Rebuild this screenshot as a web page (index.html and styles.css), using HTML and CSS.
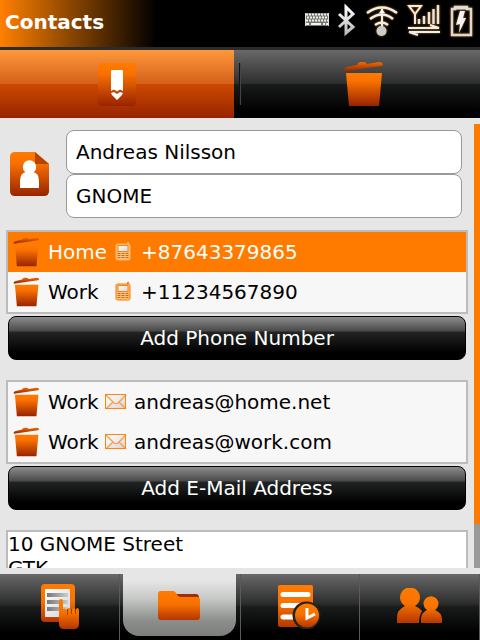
FILE: index.html
```html
<!DOCTYPE html>
<html lang="en">
<head>
<meta charset="utf-8">
<meta name="viewport" content="width=device-width, initial-scale=1">
<title>Contacts</title>
<link rel="stylesheet" href="styles.css">
</head>
<body>
<svg class="defs" aria-hidden="true">
  <defs>
    <linearGradient id="orange" x1="0" y1="0" x2="0" y2="1"><stop offset="0" stop-color="#ff7b00"/><stop offset=".25" stop-color="#f97100"/><stop offset="1" stop-color="#982300"/></linearGradient>
    <linearGradient id="lid" x1="0" y1="0" x2="0" y2="1"><stop offset="0" stop-color="#f06c00"/><stop offset="1" stop-color="#982300"/></linearGradient>
    <linearGradient id="warm" x1="0" y1="0" x2="0" y2="1"><stop offset="0" stop-color="#ff7b00"/><stop offset=".45" stop-color="#f87200"/><stop offset="1" stop-color="#b53600"/></linearGradient>
    <linearGradient id="paper" x1="0" y1="0" x2="1" y2="1"><stop offset="0" stop-color="#fff"/><stop offset="1" stop-color="#d4d4d8"/></linearGradient>
    <linearGradient id="silver" x1="0" y1="0" x2="0" y2="1"><stop offset="0" stop-color="#fff"/><stop offset="1" stop-color="#bbb"/></linearGradient>
    <linearGradient id="lines" x1="0" y1="0" x2="1" y2="0"><stop offset="0" stop-color="#777"/><stop offset="1" stop-color="#ccc"/></linearGradient>
  </defs>
  <symbol id="trash" viewBox="0 0 40 46">
    <path d="M1 9Q1 7 4 6L14 4Q15 1 18 1H21Q23 1 24 3L36 1Q39 1 40 3Q40 5 38 5L4 10Q1 11 1 9Z" fill="url(#lid)"/>
    <path d="M3 12H39L36 45H6Z" fill="url(#orange)"/>
  </symbol>
  <symbol id="phone" viewBox="0 0 22 22">
    <rect x="4" y="3" width="14" height="16" rx="1.5" fill="#ffc27c" stroke="currentColor"/>
    <path d="M15 1h2v2h-2z" fill="currentColor"/>
    <rect x="6" y="4.500" width="10" height="6" fill="url(#paper)" stroke="#f58416"/>
    <path d="M5.500 12.500H17M5.500 14.500H17M5.500 16.500H17" stroke="#cf6c12" stroke-dasharray="3 1"/>
  </symbol>
  <symbol id="mail" viewBox="0 0 22 22">
    <rect x="1" y="4" width="20" height="14" fill="url(#paper)"/>
    <path d="M1 4L9 12Q11 13.500 13 12L21 4M1 18L8 11M21 18L14 11" fill="none" stroke="#ff9a3c" stroke-width="1.200"/>
    <rect x=".5" y="3.500" width="20" height="14" fill="none" stroke="#ff8410"/>
  </symbol>
</svg>

<header class="titlebar">
  <h1>Contacts</h1>
  <div class="status">
    <svg width="26" height="40" viewBox="304 0 26 40" role="img" aria-label="Keyboard"><rect x="305" y="13" width="24" height="13" fill="#777770"/><path d="M306 14.500H329M307 17.500H329M306 20.500H329" stroke="#f0f0ea" stroke-width="2" stroke-dasharray="2 1"/><path d="M306 24H309M311 24H321M323 24H325M326 24H328" stroke="#f4f4ee" stroke-width="2"/><path d="M305.500 13V26M328.500 13V26" stroke="#deded8"/></svg>
    <svg width="22" height="40" viewBox="338 0 22 40" role="img" aria-label="Bluetooth"><path d="M341 14L355 27L348 33V7L355 14L341 27" fill="none" stroke="url(#silver)" stroke-width="3"/></svg>
    <svg class="glow" width="36" height="40" viewBox="365 0 36 40" role="img" aria-label="Wireless"><path d="M368 13Q383 2 398 13M371 19Q383 10 394 19M376 25Q383 20 389 25" fill="none" stroke="#f4eee6" stroke-width="2.400"/><path d="M383 9V28" stroke="#eee" stroke-width="2"/><path d="M380 13L383 9L386 13Z" fill="#fff"/><circle cx="382.500" cy="31" r="5" fill="#ccc"/></svg>
    <svg class="glow" width="36" height="40" viewBox="407 0 36 40" role="img" aria-label="Signal"><path d="M410 6H422L416 14Z M416 13V24" fill="none" stroke="#f6e6dc" stroke-width="2"/><path d="M420 24V19M425 24V16M430 24V12M434.500 24V9M439 24V5" stroke="#ece4e0" stroke-width="2.400"/><path d="M409 28H440L431 25M441 32H410L419 35" fill="none" stroke="#eee" stroke-width="2"/></svg>
    <svg class="glow" width="26" height="40" viewBox="448 0 26 40" role="img" aria-label="Battery charging"><path d="M452 9H455V7H467V9H471V35H452Z" fill="none" stroke="#ddd8d2" stroke-width="2.400"/><path d="M454 8H468" stroke="#ddd" stroke-width="3"/><path d="M460 11H465L463 18L466 18L459 33L460 24L456 25Z" fill="#f4f4f4"/></svg>
  </div>
</header>

<div class="toolbar">
  <button class="tool tool-edit" type="button" aria-label="Edit">
    <svg width="40" height="46" viewBox="0 0 40 46"><rect x="1" y="2" width="38" height="43" rx="4" fill="url(#orange)"/><path d="M15 9H25Q26 9 26 10V30L23 28.500L20 30.500L17 28.500L14 30V10Q14 9 15 9Z" fill="#fff"/><path d="M14 32L17 31L20 33L23 31L26 32L25 34L20 39L15 34Z" fill="#fff"/></svg>
  </button>
  <button class="tool tool-delete" type="button" aria-label="Delete">
    <svg width="40" height="46"><use href="#trash"/></svg>
  </button>
</div>

<main class="view">
  <form class="scroll">
    <div class="identity">
      <svg width="40" height="44" viewBox="0 0 40 44" aria-hidden="true"><path d="M5 0H25L39 12V39Q39 44 34 44H5Q0 44 0 39V5Q0 0 5 0Z" fill="url(#orange)"/><path d="M25 0L39 12H25Z" fill="#b84200"/><circle cx="19.500" cy="15" r="6.700" fill="#fff"/><path d="M10 36V29Q10 21 16 20H23Q29 21 29 29V36Z" fill="#fff"/></svg>
      <div class="names">
        <input type="text" value="Andreas Nilsson" aria-label="Name">
        <input type="text" value="GNOME" aria-label="Organization">
      </div>
    </div>

    <section class="group phones">
      <ul>
        <li class="selected"><button class="remove" type="button" aria-label="Remove"><svg width="28" height="30"><use href="#trash"/></svg></button><span class="kind">Home</span><svg class="type" width="22" height="22"><use href="#phone"/></svg><span>+87643379865</span></li>
        <li><button class="remove" type="button" aria-label="Remove"><svg width="28" height="30"><use href="#trash"/></svg></button><span class="kind">Work</span><svg class="type" width="22" height="22"><use href="#phone"/></svg><span>+11234567890</span></li>
      </ul>
      <button class="add" type="button">Add Phone Number</button>
    </section>

    <section class="group mails">
      <ul>
        <li><button class="remove" type="button" aria-label="Remove"><svg width="28" height="30"><use href="#trash"/></svg></button><span class="kind">Work</span><svg class="type" width="22" height="22"><use href="#mail"/></svg><span>andreas@home.net</span></li>
        <li><button class="remove" type="button" aria-label="Remove"><svg width="28" height="30"><use href="#trash"/></svg></button><span class="kind">Work</span><svg class="type" width="22" height="22"><use href="#mail"/></svg><span>andreas@work.com</span></li>
      </ul>
      <button class="add" type="button">Add E-Mail Address</button>
    </section>

    <textarea class="address" rows="3" aria-label="Address">10 GNOME Street
GTK</textarea>
  </form>
  <div class="scrollbar"><div class="thumb"></div></div>
</main>

<nav class="tabs">
  <button type="button" aria-label="Select">
    <svg width="40" height="46" viewBox="40 583 40 46"><rect x="41" y="584" width="34" height="38" rx="4" fill="url(#warm)"/><rect x="45" y="589" width="25" height="28" fill="url(#paper)"/><path d="M47 593H68V597H47ZM47 600H68V604H47ZM47 607H68V611H47Z" fill="url(#lines)"/><path d="M59 601Q59 599 61 599Q63 599 63 601V609Q65 608 67 610Q67 608 69 608Q71 608 71 610L72 611Q72 608 73.500 608Q75 608 75.500 611Q76 608 77.500 608Q79 608 79 611V624Q79 629 74 629H64Q59 629 59 624Z" fill="url(#warm)"/><path d="M67.500 609V615M71.500 609V614M75.500 609V614" stroke="#8c3a08" stroke-width=".8"/></svg>
  </button>
  <button class="current" type="button" aria-label="Folder" aria-current="page">
    <svg width="44" height="34" viewBox="157 590 44 34"><path d="M174 595H196Q199 595 199 599H178Z" fill="#a52c00"/><path d="M161 592H173Q175 592 176 594L178 597Q179 598 181 598H197Q200 598 200 601V618Q200 621 197 621H161Q158 621 158 618V595Q158 592 161 592Z" fill="url(#warm)"/></svg>
  </button>
  <button type="button" aria-label="History">
    <svg width="44" height="46" viewBox="277 584 44 46"><rect x="278" y="586" width="35" height="42" rx="2" fill="url(#warm)"/><path d="M283 595.500H308M283 606.500H308M283 618H298" stroke="#fff" stroke-width="5" stroke-linecap="round"/><circle cx="306.500" cy="616.500" r="14" fill="#202220"/><circle cx="307" cy="616.500" r="12" fill="url(#warm)"/><path d="M307 609V619L315 615" fill="none" stroke="#fff" stroke-width="3"/></svg>
  </button>
  <button type="button" aria-label="People">
    <svg width="46" height="36" viewBox="397 589 46 36"><path d="M397 624V618Q397 611 405 607A10 10 0 1 1 415 607Q420 609 422 612Q419 617 419 624Z" fill="url(#warm)"/><path d="M421 624V620Q421 614 427 611A7.500 7.500 0 1 1 435 611Q442 614 442 620V624Z" fill="url(#warm)"/></svg>
  </button>
</nav>
</body>
</html>
```
FILE: styles.css
```css
* {
  box-sizing: border-box;
}

body {
  margin: 0;
  height: 100vh;
  display: flex;
  flex-direction: column;
  background: #e6e6e6;
  color: #000;
  font: 20px/24px "DejaVu Sans", sans-serif;
}

button,
input,
textarea {
  margin: 0;
  font: inherit;
  color: inherit;
}

button {
  border: 0;
  padding: 0;
  background: none;
}

svg {
  display: block;
  flex: none;
}

.defs {
  position: absolute;
  width: 0;
  height: 0;
}

.titlebar {
  flex: none;
  height: 50px;
  display: flex;
  justify-content: space-between;
  padding: 0 6px 0 5px;
  border-bottom: 3px solid #2b2b2b;
  background: linear-gradient(90deg, #ff8000, #000 156px);
  color: #fff;
}

.titlebar h1 {
  margin: 0;
  font-size: 20px;
  line-height: 44px;
}

.status {
  display: flex;
  gap: 6px;
}

.glow {
  filter: drop-shadow(0 0 1px #b87420);
}

.toolbar {
  flex: none;
  height: 68px;
  display: grid;
  grid-template-columns: 39fr 41fr;
}

.tool {
  position: relative;
  display: flex;
  align-items: center;
  justify-content: center;
}

.tool-edit {
  background: linear-gradient(#ff983c, #d4601a 50%, #cb4a00 50%, #982300);
}

.tool-delete {
  padding-left: 12px;
  background: linear-gradient(#6a686a, #2b2d2b 50%, #191c1a 50%, #000 90%);
}

.tool-delete::before {
  content: "";
  position: absolute;
  left: 5px;
  top: 13px;
  height: 42px;
  border-left: 1px solid #111;
  border-right: 1px solid #444;
}

.view {
  flex: 1;
  min-height: 0;
  display: flex;
  gap: 6px;
  padding: 6px 0;
}

.scroll {
  flex: 1;
  min-width: 0;
  overflow: hidden;
  padding: 6px 0 0 6px;
}

.identity {
  display: flex;
  align-items: center;
  gap: 16px;
  padding: 0 6px 0 4px;
}

.names {
  flex: 1;
  display: flex;
  flex-direction: column;
}

.names input {
  width: 100%;
  height: 44px;
  padding: 0 9px;
  border: 1px solid #999;
  border-radius: 8px;
  background: #fff;
}

.group {
  margin: 12px 0 20px;
}

.group ul {
  margin: 0 0 2px;
  padding: 0;
  list-style: none;
  border: 2px solid #bcbcbc;
  background: #f7f7f7;
}

.group li {
  height: 40px;
  display: flex;
  align-items: center;
  gap: 7px;
  padding-left: 4px;
  white-space: nowrap;
}

.group .selected {
  background: #ff7b00;
  color: #fff;
}

.remove {
  margin-right: 1px;
}

.type {
  color: #ff7b00;
}

.selected .type {
  color: #ffb469;
}

.phones .kind {
  width: 57px;
}

.mails .kind {
  width: 50px;
}

.add {
  display: block;
  width: calc(100% - 4px);
  height: 44px;
  margin: 0 2px;
  border: 1px solid #000;
  border-radius: 8px;
  background: linear-gradient(#8c8c8c, #4a4a4a 33%, #222423 36%, #000 85%);
  color: #fff;
}

.address {
  display: block;
  width: 100%;
  padding: 0;
  border: 2px solid #bcbcbc;
  background: #fff;
  resize: none;
}

.scrollbar {
  flex: none;
  width: 6px;
  background: #9a989a;
}

.thumb {
  height: 90%;
  background: #ff7b00;
}

.tabs {
  flex: none;
  height: 66px;
  display: grid;
  grid-template-columns: repeat(4, 1fr);
  background: linear-gradient(#6a686a, #2b2d2b 45%, #191c1a 50%, #000 90%);
}

.tabs button {
  display: flex;
  align-items: center;
  justify-content: center;
  padding-bottom: 2px;
  border-right: 1px solid #5a5a5a;
}

.tabs button + button:not(.current):not(:last-child) {
  border-left: 1px solid #5a5a5a;
  padding-right: 2px;
}

.tabs .current {
  margin: 0 4px 4px 3px;
  padding: 2px 1px 0 0;
  border: 0;
  border-radius: 0 0 16px 16px;
  background: linear-gradient(#e6e6e6 10%, #c6c8c6 40%, #8c8e8c 75%, #7c7e7c);
}
```
